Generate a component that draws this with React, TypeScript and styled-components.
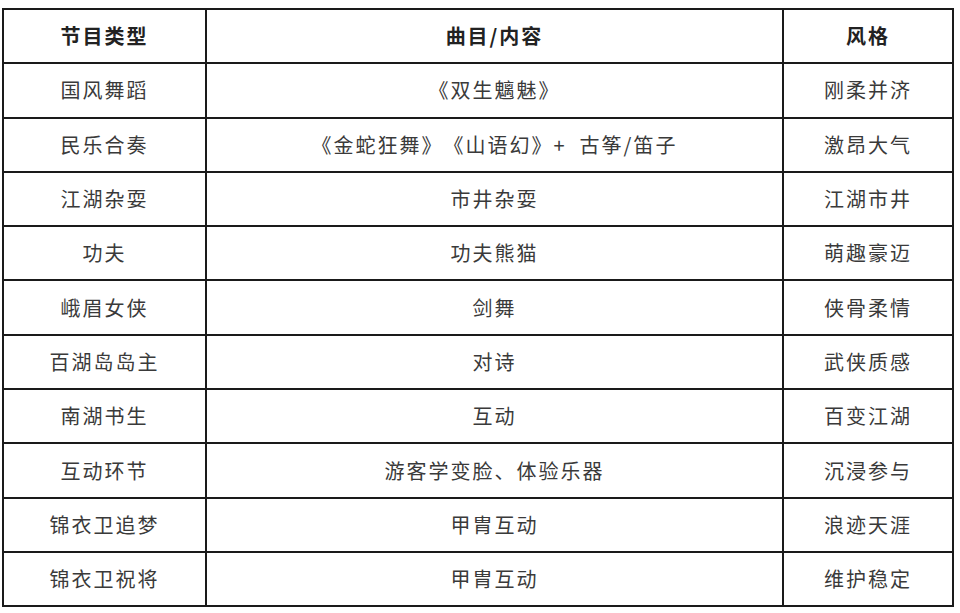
import React from "react"
import styled, { createGlobalStyle } from "styled-components"

type Program = {
  kind: string
  content: string
  style: string
}

const programs: Program[] = [
  { kind: "国风舞蹈", content: "《双生魑魅》", style: "刚柔并济" },
  { kind: "民乐合奏", content: "《金蛇狂舞》《山语幻》+\u00a0\u00a0古筝/笛子", style: "激昂大气" },
  { kind: "江湖杂耍", content: "市井杂耍", style: "江湖市井" },
  { kind: "功夫", content: "功夫熊猫", style: "萌趣豪迈" },
  { kind: "峨眉女侠", content: "剑舞", style: "侠骨柔情" },
  { kind: "百湖岛岛主", content: "对诗", style: "武侠质感" },
  { kind: "南湖书生", content: "互动", style: "百变江湖" },
  { kind: "互动环节", content: "游客学变脸、体验乐器", style: "沉浸参与" },
  { kind: "锦衣卫追梦", content: "甲胄互动", style: "浪迹天涯" },
  { kind: "锦衣卫祝将", content: "甲胄互动", style: "维护稳定" },
]

const GlobalStyle = createGlobalStyle`
  body {
    margin: 0;
    background: #ffffff;
    font-family: "Noto Sans CJK SC", "Noto Sans", sans-serif;
  }
`

const Page = styled.div`
  padding: 8px 0 0 2px;
`

const Table = styled.table`
  width: 950px;
  border-collapse: collapse;
  border: 2px solid #1a1a1a;
  table-layout: fixed;
`

const Row = styled.tr`
  height: 54.3px;
`

const Cell = styled.td<{ $head?: boolean }>`
  border: 2px solid #1a1a1a;
  padding: 0;
  text-align: center;
  vertical-align: middle;
  font-size: 20px;
  letter-spacing: 2px;
  line-height: 1;
  text-spacing-trim: space-all;
  white-space: pre;
  color: ${(p) => (p.$head ? "#222222" : "#3a3a3a")};
  font-weight: ${(p) => (p.$head ? 700 : 400)};
`

const App = () => {
  return (
    <Page>
      <GlobalStyle />
      <Table>
        <colgroup>
          <col style={{ width: 203 }} />
          <col style={{ width: 577 }} />
          <col style={{ width: 170 }} />
        </colgroup>
        <tbody>
          <Row>
            <Cell as="th" $head>节目类型</Cell>
            <Cell as="th" $head>曲目/内容</Cell>
            <Cell as="th" $head>风格</Cell>
          </Row>
          {programs.map((p) => (
            <Row key={p.kind}>
              <Cell>{p.kind}</Cell>
              <Cell>{p.content}</Cell>
              <Cell>{p.style}</Cell>
            </Row>
          ))}
        </tbody>
      </Table>
    </Page>
  )
}

export default App
